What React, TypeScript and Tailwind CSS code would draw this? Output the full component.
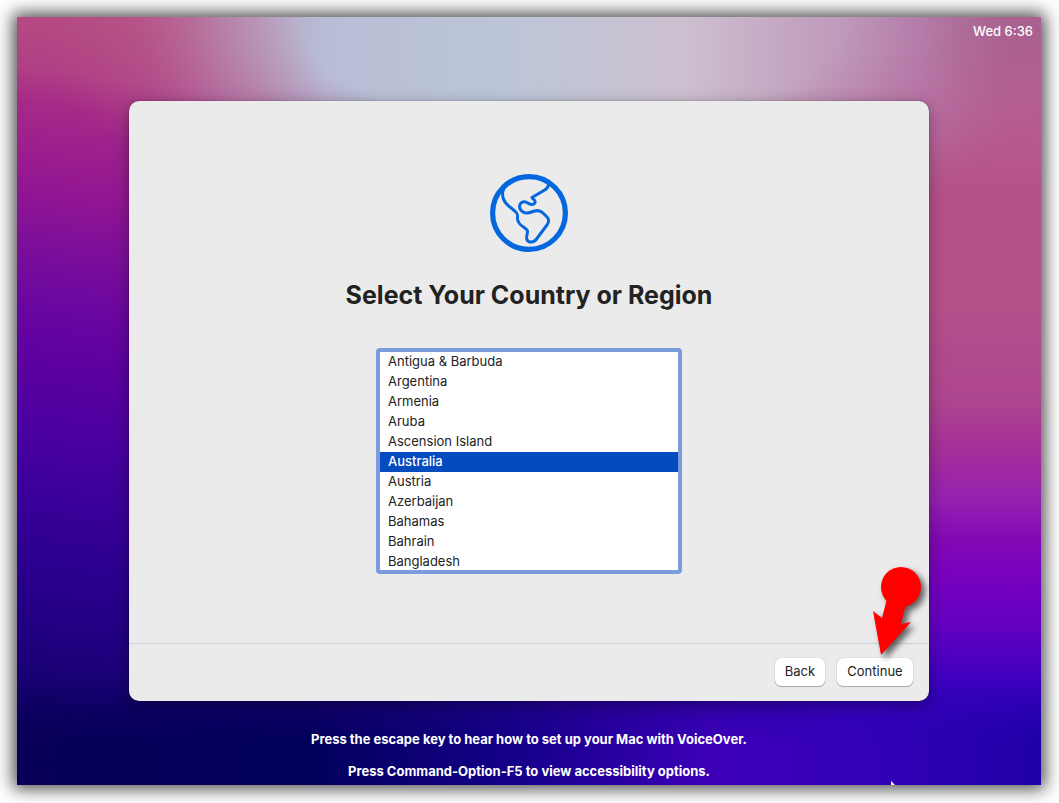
import { useState } from "react";

const regions = [
  "Antigua & Barbuda",
  "Argentina",
  "Armenia",
  "Aruba",
  "Ascension Island",
  "Australia",
  "Austria",
  "Azerbaijan",
  "Bahamas",
  "Bahrain",
  "Bangladesh",
];

function Wallpaper() {
  return (
    <div aria-hidden="true" className="absolute inset-0 overflow-hidden">
      <div className="absolute inset-0 bg-[linear-gradient(188deg,#b85a8a_0%,#b54b82_15%,#b04085_21%,#a52a88_25%,#931692_34%,#780d9c_42%,#6a06a0_47%,#5800a0_55%,#4800a0_62%,#380098_69%,#2c0090_75%,#200080_83%,#14006c_91%,#080058_100%)]" />
      <div className="absolute inset-0 bg-[linear-gradient(to_bottom,#a8608f_0%,#b85c94_12%,#b5508a_24%,#b5508a_38%,#ae4590_50%,#a63098_56%,#9520b0_63%,#8408b4_68%,#7400c0_74%,#6400c0_79%,#3c00c0_87%,#1c00a8_100%)] [mask-image:linear-gradient(to_right,transparent_40%,black_85%)]" />
      <div className="absolute inset-x-0 top-0 h-[30%] bg-[linear-gradient(to_right,#b54b82_0%,#b86090_12%,#b894b5_20%,#b8bdd5_30%,#bcc6d8_48%,#cdc0d0_65%,#c3a4c0_76%,#b98ab4_88%,#ab6590_97%)] [mask-image:radial-gradient(53%_100%_at_54%_0%,black_50%,transparent)]" />
      <div className="absolute inset-x-0 bottom-0 h-[14%] bg-[linear-gradient(to_right,#080058_0%,#02005a_28%,#140088_48%,#3c00b8_68%,#3400b8_82%,#2000a8_100%)] [mask-image:linear-gradient(to_top,black_40%,transparent)]" />
    </div>
  );
}

function Globe() {
  return (
    <svg viewBox="0 0 80 80" fill="none" stroke="#0567de" strokeLinejoin="round" className="size-20" aria-hidden="true">
      <circle cx="40" cy="40" r="36.4" strokeWidth="5.2" />
      <path
        d="M17 13C13 16 13 22 14.500 26C16 31 20 33 24 36.500C28 39.500 29 41 28.500 44C28 48 31 52 34.500 54C39 57 39 58 38 62C37 66 38 69 42 69C46 69 47 67 49 64L58 52C60 49 60 46 58 44L54 40C51 37 48 37 44 38.500C40 40 37 41 34 39C31 37 30 34 31 31.500C32 29 35 28 38 29.500C40 31 43 32 45 31C47 29 46 27 44 26L43 24.500L54 18C58 16 60 14 59.500 10"
        strokeWidth="3"
      />
    </svg>
  );
}

function Pointer() {
  return (
    <svg
      viewBox="0 0 60 100"
      className="pointer-events-none absolute right-0 bottom-10 h-[100px] w-[60px] overflow-visible drop-shadow-[4px_4px_3px_rgba(0,0,0,0.6)]"
      aria-hidden="true"
    >
      <circle cx="32" cy="26" r="20" fill="#f00" />
      <path d="M19 34L13 57L4 50L12 94L42 61L32 63L38 40Z" fill="#f00" />
    </svg>
  );
}

const buttonClass =
  "h-7 rounded-md bg-white pb-0.5 text-[13px] leading-4 text-[#222] shadow-[0_0_1px_rgba(0,0,0,0.35),0_1px_1px_rgba(0,0,0,0.25)]";

export default function App() {
  const [region, setRegion] = useState("Australia");

  return (
    <div className="min-h-screen bg-white pt-[17px] pr-[18px] pb-[18px] pl-[17px] font-['Inter',sans-serif]">
      <div className="relative flex min-h-[768px] flex-col shadow-[0_0_16px_4px_rgba(0,0,0,0.7)]">
        <Wallpaper />
        <header className="relative flex justify-end px-2 pt-1.5 text-[13px] leading-4 font-medium text-white">
          <time>Wed 6:36</time>
        </header>

        <main className="relative mx-auto mt-[62px] flex min-h-[600px] w-full max-w-[800px] flex-col rounded-[10px] bg-[#ebebeb] shadow-[0_0_1px_rgba(0,0,0,0.7),0_4px_16px_rgba(0,0,0,0.35)]">
          <div className="flex flex-1 flex-col items-center pt-[72px]">
            <Globe />
            <h1 className="mt-6 text-[25px] leading-9 font-bold text-[#222]">
              <label htmlFor="region">Select Your Country or Region</label>
            </h1>
            <select
              id="region"
              size={11}
              value={region}
              onChange={(e) => setRegion(e.target.value)}
              className="mt-[35px] h-[226px] w-[306px] appearance-none overflow-hidden rounded-[4px] border-4 border-[#7a9cdc] bg-white p-0 text-[13px] text-[#222] outline-none"
            >
              {regions.map((name) => (
                <option
                  key={name}
                  value={name}
                  className="h-5 px-2 pt-px pb-0 leading-[18px] checked:bg-[linear-gradient(#034bbf,#034bbf)] checked:font-medium checked:[-webkit-text-fill-color:white]"
                >
                  {name}
                </option>
              ))}
            </select>
          </div>
          <footer className="flex justify-end gap-3 border-t border-[#d0d0d0] px-4 pt-3.5 pb-[15px]">
            <button type="button" className={`${buttonClass} w-[50px]`}>
              Back
            </button>
            <button type="button" className={`${buttonClass} w-[76px]`}>
              Continue
            </button>
          </footer>
          <Pointer />
        </main>

        <div className="relative mt-[30px] flex flex-col items-center gap-4 pb-1.5 text-center text-[13px] leading-4 font-bold text-white">
          <p>Press the escape key to hear how to set up your Mac with VoiceOver.</p>
          <p>Press Command-Option-F5 to view accessibility options.</p>
        </div>
        <svg viewBox="0 0 4 4" className="absolute right-[146px] bottom-0 size-1" aria-hidden="true">
          <path d="M0 0L4 4H0Z" fill="#fff" />
        </svg>
      </div>
    </div>
  );
}
